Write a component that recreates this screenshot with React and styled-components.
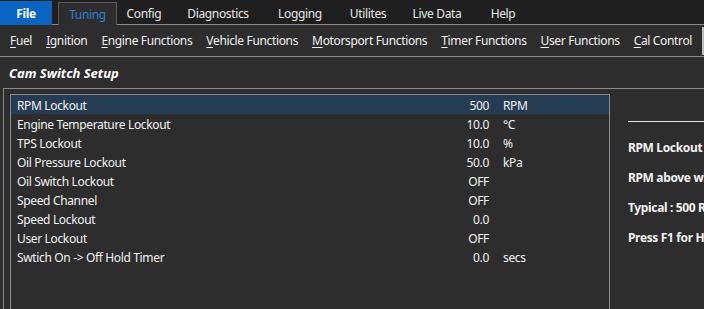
import React from 'react';
import styled, { createGlobalStyle } from 'styled-components';

const GlobalStyle = createGlobalStyle`
  html, body {
    margin: 0;
    padding: 0;
    background: #2d2d2d;
    overflow: hidden;
  }
  body {
    font-family: "Noto Sans", "Open Sans", sans-serif;
    font-size: 12px;
    letter-spacing: -0.35px;
    color: #f2f2f2;
  }
`;

const Page = styled.div`
  width: 704px;
  height: 309px;
  display: flex;
  flex-direction: column;
  background: #2d2d2d;
  overflow: hidden;
`;

const TopBar = styled.div`
  height: 24px;
  display: flex;
  align-items: flex-end;
  background: #1f1f1f;
  border-bottom: 1px solid #8a8a8a;
`;

const FileButton = styled.div`
  width: 52px;
  height: 24px;
  background: #0a64c2;
  color: #fff;
  font-weight: bold;
  display: flex;
  align-items: center;
  justify-content: center;
  margin-bottom: -1px;
  margin-right: 6px;
`;

const TopTab = styled.div`
  width: ${p => p.w}px;
  box-sizing: border-box;
  display: flex;
  align-items: center;
  justify-content: center;
  color: ${p => (p.active ? '#2a7fd4' : '#e8e8e8')};
  background: ${p => (p.active ? '#2d2d2d' : 'transparent')};
  border: 1px solid ${p => (p.active ? '#5a5a5a' : 'transparent')};
  border-bottom: none;
  margin-bottom: ${p => (p.active ? '-1px' : '0')};
  height: ${p => (p.active ? '23px' : '22px')};
`;

const Ribbon = styled.div`
  height: 31px;
  display: flex;
  align-items: center;
  gap: 14px;
  padding-left: 10px;
  border-bottom: 1px solid #8a8a8a;
  position: relative;
  white-space: nowrap;
`;

const RibbonItem = styled.span`
  color: #f0f0f0;
  u {
    text-decoration: underline;
    text-underline-offset: 2px;
  }
`;

const RibbonEdge = styled.div`
  position: absolute;
  right: 0;
  top: 2px;
  width: 2px;
  height: 28px;
  background: #bdbdbd;
`;

const TitleRow = styled.div`
  height: 31px;
  display: flex;
  align-items: center;
  padding-left: 9px;
  font-weight: bold;
  font-style: italic;
  font-size: 13px;
  letter-spacing: 0;
  color: #fff;
`;

const Body = styled.div`
  flex: 1;
  display: flex;
  margin-left: 3px;
  border-top: 1px solid #8a8a8a;
  border-left: 1px solid #8a8a8a;
  padding: 5px 0 0 6px;
`;

const Table = styled.div`
  width: 598px;
  flex: none;
  border: 1px solid #8a8a8a;
  border-bottom: none;
  display: flex;
  flex-direction: column;
`;

const Row = styled.div`
  height: 19px;
  box-sizing: border-box;
  padding-top: 2px;
  display: grid;
  grid-template-columns: 1fr 80px 120px;
  align-items: center;
  background: ${p => (p.selected ? '#253c53' : 'transparent')};
  color: #f2f2f2;
`;

const Label = styled.span`
  padding-left: 6px;
`;

const Value = styled.span`
  text-align: right;
`;

const Unit = styled.span`
  padding-left: 14px;
`;

const Info = styled.div`
  flex: 1;
  padding: 27px 0 0 18px;
  display: flex;
  flex-direction: column;
  font-weight: bold;
  white-space: nowrap;
  overflow: hidden;
`;

const InfoRule = styled.div`
  height: 1px;
  background: #e6e6e6;
  margin-bottom: 11px;
`;

const InfoLine = styled.div`
  height: 30px;
  line-height: 30px;
`;

const tabs = [
  { t: 'Tuning', w: 59, active: true },
  { t: 'Config', w: 54 },
  { t: 'Diagnostics', w: 94 },
  { t: 'Logging', w: 70 },
  { t: 'Utilites', w: 66 },
  { t: 'Live Data', w: 72 },
  { t: 'Help', w: 60 },
];

const menu = [
  ['F', 'uel'],
  ['I', 'gnition'],
  ['E', 'ngine Functions'],
  ['V', 'ehicle Functions'],
  ['M', 'otorsport Functions'],
  ['T', 'imer Functions'],
  ['U', 'ser Functions'],
  ['C', 'al Control'],
];

const rows = [
  ['RPM Lockout', '500', 'RPM'],
  ['Engine Temperature Lockout', '10.0', '°C'],
  ['TPS Lockout', '10.0', '%'],
  ['Oil Pressure Lockout', '50.0', 'kPa'],
  ['Oil Switch Lockout', 'OFF', ''],
  ['Speed Channel', 'OFF', ''],
  ['Speed Lockout', '0.0', ''],
  ['User Lockout', 'OFF', ''],
  ['Swtich On -> Off Hold Timer', '0.0', 'secs'],
];

export default function App() {
  return (
    <Page>
      <GlobalStyle />
      <TopBar>
        <FileButton>File</FileButton>
        {tabs.map(tab => (
          <TopTab key={tab.t} w={tab.w} active={tab.active}>
            {tab.t}
          </TopTab>
        ))}
      </TopBar>
      <Ribbon>
        {menu.map(([k, rest]) => (
          <RibbonItem key={k + rest}>
            <u>{k}</u>
            {rest}
          </RibbonItem>
        ))}
        <RibbonEdge />
      </Ribbon>
      <TitleRow>Cam Switch Setup</TitleRow>
      <Body>
        <Table>
          {rows.map(([label, value, unit], i) => (
            <Row key={label} selected={i === 0}>
              <Label>{label}</Label>
              <Value>{value}</Value>
              <Unit>{unit}</Unit>
            </Row>
          ))}
        </Table>
        <Info>
          <InfoRule />
          <InfoLine>RPM Lockout</InfoLine>
          <InfoLine>RPM above which the switch is enabled</InfoLine>
          <InfoLine>Typical : 500 RPM</InfoLine>
          <InfoLine>Press F1 for Help</InfoLine>
        </Info>
      </Body>
    </Page>
  );
}
